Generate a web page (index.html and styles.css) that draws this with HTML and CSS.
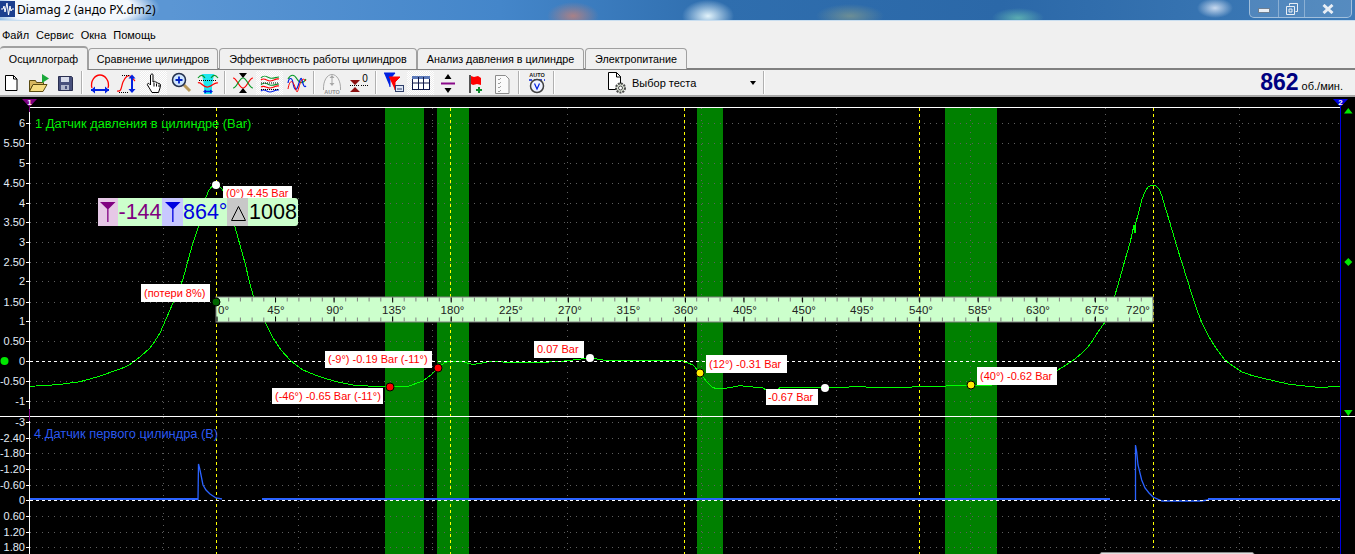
FILE: index.html
```html
<!DOCTYPE html>
<html lang="ru">
<head>
  <meta charset="UTF-8">
  <title>Diamag 2</title>
  <link rel="stylesheet" href="styles.css">
</head>
<body>

  <!-- Title bar -->
  <div class="titlebar">
    <svg class="app-icon" width="15" height="16" viewBox="0 0 15 16">
      <rect width="15" height="16" fill="#1c3f8f"/>
      <path d="M1 8h2l1-3 1 6 2-9 1.500 12 1.500-9 1 5 1-2h2" fill="none" stroke="#fff"/>
    </svg>
    <span class="app-title">Diamag 2 (андо PX.dm2)</span>
    <div class="win-btns">
      <div class="win-btn win-min"><span class="min-bar"></span></div>
      <div class="win-btn win-max">
        <svg width="12" height="12" viewBox="0 0 12 12"><path d="M3.500 2.500V.5h8v8h-2M.5 3.500h8v8h-8zM3 6h3v3H3z" fill="none" stroke="#e8eef5"/></svg>
      </div>
      <div class="win-btn win-close">
        <svg width="12" height="10" viewBox="0 0 12 10"><path d="M1.500 1l9 8M10.500 1l-9 8" stroke="#e8eef5" stroke-width="3"/></svg>
      </div>
    </div>
  </div>

  <!-- Menu -->
  <div class="menubar">
    <span>Файл</span>
    <span>Сервис</span>
    <span>Окна</span>
    <span>Помощь</span>
  </div>

  <!-- Tabs -->
  <div class="tabs">
    <div class="tab tab-active">Осциллограф</div>
    <div class="tab tab-2">Сравнение цилиндров</div>
    <div class="tab tab-3">Эффективность работы цилиндров</div>
    <div class="tab tab-4">Анализ давления в цилиндре</div>
    <div class="tab tab-5">Электропитание</div>
  </div>

  <!-- Toolbar -->
  <div class="toolbar">
    <div class="group group-first">
      <div class="btn"><svg viewBox="0 0 24 24"><path d="M6.500 4.500h8l3.500 3.500v11.500H6.500z" fill="#fff" stroke="#000"/><path d="M14.500 4.500V8H18" fill="none" stroke="#000"/></svg></div>
      <div class="btn"><svg viewBox="0 0 24 24"><path d="M3.500 9.500h6l1 2h7v3h-11l-3 6z" fill="#d8b860" stroke="#5a4a10"/><path d="M3.500 20.500l3.500-7h14l-4 7z" fill="#f5dc80" stroke="#5a4a10"/><path d="M16 3v9l7-4.500z" fill="#1aa83a"/></svg></div>
      <div class="btn"><svg viewBox="0 0 24 24"><path d="M5.500 5.500h13l1 1v13h-14z" fill="#48507c" stroke="#2a2f50"/><rect x="8" y="6" width="8" height="5" fill="#d8dcea"/><rect x="8" y="14" width="8" height="5" fill="#b0b6cc"/><rect x="12" y="15" width="2" height="3" fill="#48507c"/></svg></div>
    </div>
    <div class="sep"></div>
    <div class="group">
      <div class="btn"><svg viewBox="0 0 24 24"><path d="M4 17c-2-7 3-13 8-13s10 6 8 13" fill="none" stroke="#f00" stroke-width="1.300"/><path d="M3 19h18" stroke="#0020e0" stroke-width="2"/><path d="M3 19l4-3.500v7zM21 19l-4-3.500v7z" fill="#0020e0"/></svg></div>
      <div class="btn"><svg viewBox="0 0 24 24"><path d="M2 20c5 1 4-4 6-9s5-7 7-6 3 3 5 5" fill="none" stroke="#f00" stroke-width="1.200"/><path d="M7 4.500h8M4 21.500h10" stroke="#000" stroke-dasharray="1 1"/><path d="M17 7v11" stroke="#0020e0" stroke-width="2"/><path d="M17 3.500l-3.500 4h7zM17 22l-3.500-4h7z" fill="#0020e0"/></svg></div>
      <div class="btn btn-on"><svg viewBox="0 0 24 24"><path d="M9 3.500c1-1 2-.5 2 .5v7l1-.5c1-.5 1.500 0 2 1 1-.5 1.500 0 2 1 1-.5 2 0 2.500 1.500l-.5 3-1.500 4.500H10L5.500 14c-.5-1 .5-2 1.500-1.500L8.500 14V4z" fill="#fff" stroke="#000"/><path d="M12 11.500v4M14.500 12.500v3M17 13.500v2.500" stroke="#000"/></svg></div>
      <div class="btn"><svg viewBox="0 0 24 24"><path d="M15 14l6 6" stroke="#b89858" stroke-width="3"/><circle cx="10" cy="9" r="6.500" fill="#cfe6ff" stroke="#24304c" stroke-width="1.500"/><path d="M6.500 9h7M10 5.500v7" stroke="#0020c0" stroke-width="1.800"/></svg></div>
      <div class="btn"><svg viewBox="0 0 24 24"><path d="M6 3h12l-2 12v8H8v-8z" fill="#1fe6ee"/><path d="M2 7c3-4 5-3 7 0M15 7c2-3 4-4 7 0" fill="none" stroke="#0a9a2a" stroke-width="1.200"/><path d="M2 12c3-2 5 5 10 4s6-5 10-4" fill="none" stroke="#f00" stroke-width="1.200"/><path d="M3 9.500h18" stroke="#000" stroke-dasharray="1 1"/><path d="M8 20.500h8" stroke="#0020e0" stroke-width="1.500"/><path d="M7 20.500l3-2v4zM17 20.500l-3-2v4z" fill="#0020e0"/></svg></div>
    </div>
    <div class="sep"></div>
    <div class="group">
      <div class="btn"><svg viewBox="0 0 24 24"><path d="M2 7c4 0 6 10 10 10s6-10 10-10" fill="none" stroke="#f00" stroke-width="1.200"/><path d="M2 17c4 0 6-10 10-10s6 10 10 10" fill="none" stroke="#0a9a2a" stroke-width="1.200"/><path d="M8 2h8l-4 5zM8 22h8l-4-5z"/></svg></div>
      <div class="btn btn-on"><svg viewBox="0 0 24 24"><path d="M3 7c3-4 6-1 9 0s6-1 9-1M3 14c3-4 6-1 9 0s6-1 9-1" fill="none" stroke="#0a9a2a" stroke-width="1.100"/><path d="M3 9c3-3 6 1 9 1s6-3 9-2M3 16c3-2 6 1 9 1s6-3 9-2" fill="none" stroke="#f00" stroke-width="1.100"/><path d="M3 20c3-3 6 1 9 1s6-3 9-2" fill="none" stroke="#0020e0" stroke-width="1.100"/><path d="M3 12h18M3 18.500h18" stroke="#000" stroke-dasharray="1 1"/></svg></div>
      <div class="btn"><svg viewBox="0 0 24 24"><path d="M3 8c3-5 6-5 9 0s6 5 9 0" fill="none" stroke="#0a9a2a" stroke-width="1.200"/><path d="M3 12c1-6 4-6 5 0s3 9 5 3 3-10 4-6 2 8 4 6" fill="none" stroke="#0020e0" stroke-width="1.200"/><path d="M3 18c2-11 5-8 7-2s2 7 4 0 4-10 7-6" fill="none" stroke="#f00" stroke-width="1"/></svg></div>
    </div>
    <div class="sep"></div>
    <div class="group">
      <div class="btn"><svg viewBox="0 0 24 24"><path d="M3.500 19C3 10 7 3.500 12 3.500S21 10 20.500 19" fill="#f4f4f4" stroke="#a8a8a8"/><path d="M12 5v9" stroke="#a8a8a8"/><path d="M9.500 7L12 4l2.500 3zM9.500 12l2.500 3 2.500-3z" fill="#a8a8a8"/><text class="ico-text ico-grey" x="12" y="23">AUTO</text></svg></div>
      <div class="btn"><svg viewBox="0 0 24 24"><path d="M3 9h10l-5 5zM3 21h10l-5-5z" fill="#8c1010"/><path d="M3 14.500h10" stroke="#000" stroke-dasharray="1 1"/><path d="M14 14.500h8" stroke="#000" stroke-dasharray="1 1"/><text class="ico-zero" x="18" y="11">0</text></svg></div>
    </div>
    <div class="sep"></div>
    <div class="group">
      <div class="btn"><svg viewBox="0 0 24 24"><path d="M2 2h11l-5 6v8" fill="#0020e0" stroke="#0020e0"/><path d="M7 6h11l-5 5v8" fill="#f00" stroke="#f00"/><rect x="13.500" y="14.500" width="8" height="6" fill="#dfe7f5" stroke="#30406a"/><path d="M15 18h5" stroke="#30406a"/></svg></div>
      <div class="btn btn-on"><svg viewBox="0 0 24 24"><rect x="3.500" y="5.500" width="17" height="13" fill="#fff" stroke="#101848"/><rect x="3" y="5" width="18" height="3" fill="#5a78b8"/><path d="M9.500 6v12M14.500 6v12M3.500 12h17" stroke="#101848"/></svg></div>
      <div class="btn"><svg viewBox="0 0 24 24"><path d="M5 12.500h14" stroke="#8a0a8a" stroke-width="2"/><path d="M12 3l-3.500 5h7zM12 22l-3.500-5h7z" fill="#000"/></svg></div>
      <div class="btn"><svg viewBox="0 0 24 24"><path d="M7 4v18" stroke="#000" stroke-width="1.300"/><path d="M8 5l3 1 4-1 3 2v7l-4-1-4 1-2-1z" fill="#f00"/><path d="M13 19h6M16 16v6" stroke="#0a8a2a" stroke-width="2"/></svg></div>
      <div class="btn"><svg viewBox="0 0 24 24"><path d="M5.500 4.500h10l3.500 3.500v14.500H5.500z" fill="#fafafa" stroke="#8c8c8c"/><path d="M8 8l1 1 2-2M8 12l1 1 2-2M8 16l1 1 2-2M8 20l1 1 2-2" fill="none" stroke="#a0a0a0"/></svg></div>
    </div>
    <div class="sep"></div>
    <div class="group">
      <div class="btn"><svg viewBox="0 0 24 24"><text class="ico-text" x="12" y="6">AUTO</text><path d="M4 9h16" stroke="#0020e0" stroke-dasharray="3 2" stroke-width="1.500"/><circle cx="12" cy="15" r="6.500" fill="#eef2ff" stroke="#404040" stroke-width="1.500"/><path d="M9.500 12.500L12 18l2.500-5.500" fill="none" stroke="#0020e0" stroke-width="1.200"/></svg></div>
    </div>
    <div class="sep"></div>
    <div class="combo">
      <svg class="combo-icon" width="24" height="24" viewBox="0 0 24 24"><path d="M3.500 1.500h8l4 4v13h-12z" fill="#fff" stroke="#000"/><path d="M11.500 1.500V6H16" fill="none" stroke="#000"/><circle cx="15.500" cy="17" r="4.500" fill="#dfe6d8" stroke="#4a4a4a" stroke-width="2" stroke-dasharray="2 1"/><circle cx="15.500" cy="17" r="2" fill="#fff" stroke="#4a4a4a"/></svg>
      <span class="combo-text">Выбор теста</span>
      <span class="combo-caret"></span>
    </div>
    <div class="sep"></div>
    <div class="rpm"><b>862</b> об./мин.</div>
  </div>

  <!-- Oscilloscope -->
  <div class="scope">
    <svg class="plot" width="1355" height="457" viewBox="0 97 1355 457">
      <!-- bands -->
      <g class="band">
        <rect x="385" y="108" width="39" height="446"/>
        <rect x="437" y="108" width="32" height="446"/>
        <rect x="697" y="108" width="26" height="446"/>
        <rect x="945" y="108" width="52" height="446"/>
      </g>

      <!-- grid -->
      <path class="grid" d="M30 123.500H1340M30 143.500H1340M30 163.500H1340M30 183.500H1340M30 203.500H1340M30 222.500H1340M30 242.500H1340M30 262.500H1340M30 281.500H1340M30 302.500H1340M30 321.500H1340M30 341.500H1340M30 381.500H1340M30 401.500H1340M30 422.500H1340M30 438.500H1340M30 453.500H1340M30 469.500H1340M30 485.500H1340M30 516.500H1340M30 532.500H1340M30 547.500H1340"/>
      <path class="grid" d="M163.500 108V416M298.500 108V416M432.500 108V416M567.500 108V416M701.500 108V416M836.500 108V416M970.500 108V416M1105.500 108V416M1239.500 108V416M163.500 417V554M298.500 417V554M432.500 417V554M567.500 417V554M701.500 417V554M836.500 417V554M970.500 417V554M1105.500 417V554M1239.500 417V554"/>
      <path class="cursor-line" d="M216.500 108V554M450.500 108V554M684.500 108V554M919.500 108V554M1153.500 108V548"/>

      <!-- frame -->
      <path class="frame" d="M30 107.500H1340M0 416.500H1355M29.500 107V554"/>
      <path class="frame" d="M26 123.500h4M26 143.500h4M26 163.500h4M26 183.500h4M26 203.500h4M26 222.500h4M26 242.500h4M26 262.500h4M26 281.500h4M26 302.500h4M26 321.500h4M26 341.500h4M26 361.500h4M26 381.500h4M26 401.500h4M26 422.500h4M26 438.500h4M26 453.500h4M26 469.500h4M26 485.500h4M26 500.500h4M26 516.500h4M26 532.500h4M26 547.500h4"/>
      <path class="marker-1-line" d="M29.500 107v5M29.500 409v12"/>
      <path class="marker-2-line" d="M1340.500 103V554"/>

      <!-- axis labels -->
      <g class="axis">
        <text x="25" y="127">6</text>
        <text x="25" y="147">5.50</text>
        <text x="25" y="167">5</text>
        <text x="25" y="187">4.50</text>
        <text x="25" y="207">4</text>
        <text x="25" y="226">3.50</text>
        <text x="25" y="246">3</text>
        <text x="25" y="266">2.50</text>
        <text x="25" y="285">2</text>
        <text x="25" y="306">1.50</text>
        <text x="25" y="325">1</text>
        <text x="25" y="345">0.50</text>
        <text x="25" y="365">0</text>
        <text x="25" y="385">-0.50</text>
        <text x="25" y="405">-1</text>
        <text x="25" y="426">-3</text>
        <text x="25" y="442">-2.40</text>
        <text x="25" y="457">-1.80</text>
        <text x="25" y="473">-1.20</text>
        <text x="25" y="489">-0.60</text>
        <text x="25" y="504">0</text>
        <text x="25" y="520">0.60</text>
        <text x="25" y="536">1.20</text>
        <text x="25" y="551">1.80</text>
      </g>

      <!-- traces -->
      <polyline class="trace-green" points="30,386.300 45,385.500 60,384.500 70,383 80,381.700 90,379 100,376 110,372.500 120,369 125,367 130,364.500 140,357 150,348 155,341 160,333 166,319 173,303 178,291 182.700,280 186,268 190,253 194,240 198,228 203,208 206,197 209,190 212,186.500 216,185 219,186 222,189 226,198 230,212 235,227 240,245 245,263 249,280 253,295 259,310 265,322 273,338 281,350 290,360 296,365 303,370 315,375 327,379 340,382.500 353,385 378,386.700 390,387 407,386.700 423,381 431,375 438,368 444,363 450,361 460,361 473,364.600 490,361.500 527,363 560,361.500 590,358 610,361 640,360.500 663,360.500 683,361 693,365 700,373 707,382 712,387 717,389 727,388 740,385.700 763,388 766,390 778,390 780,387 825,387 840,388 853,386.500 890,388 923,386.500 970,385.500 993,385 1030,382 1058,370 1066,365 1075,359 1082,353 1088,347 1093,340 1098,332 1105,322 1115,295 1120,278 1125,260 1130,243 1134,225 1135,233 1136,222 1138,215 1141.700,200 1145,192 1148,187 1151,185.500 1153,185 1156,186 1159,189 1162,196 1165,207 1168.500,218 1172,230 1177,247 1182,263 1187,279 1192,295 1197,310 1202,323 1207,333 1212,342 1218,351 1225,360 1233,366 1242,372 1252,375.500 1262,378 1275,381 1288,384 1300,385.500 1315,387 1328,387 1340,386.700"/>
      <path class="trace-blue-flat" d="M30 499H198M262 499H1110M1208 499H1340"/>
      <polyline class="trace-blue" points="198,500 198.500,464 200,470 203,485 206,490 210,494 216,498 222,499"/>
      <polyline class="trace-blue" points="1135.500,500 1135.500,445 1136.700,452 1138,465 1141.700,480 1145,488 1149,493 1153,497 1162,501 1201,501 1208,500"/>
      <path class="zero-line" d="M30 361.500H1340M30 500.500H1340"/>

      <!-- sensor names -->
      <text class="name-green" x="35" y="128">1 Датчик давления в цилиндре (Bar)</text>
      <text class="name-blue" x="34" y="438">4 Датчик первого цилиндра (В)</text>

      <!-- value labels -->
      <g class="tag">
        <rect x="223" y="186" width="69" height="14"/><text x="226" y="197">(0°) 4.45 Bar</text>
        <rect x="141" y="284" width="69" height="18"/><text x="144" y="297">(потери 8%)</text>
        <rect x="325" y="351" width="107" height="17"/><text x="328" y="363">(-9°) -0.19 Bar (-11°)</text>
        <rect x="272" y="388" width="111" height="16"/><text x="275" y="400">(-46°) -0.65 Bar (-11°)</text>
        <rect x="534" y="341" width="50" height="17"/><text x="537" y="353">0.07 Bar</text>
        <rect x="706" y="355" width="81" height="18"/><text x="709" y="368">(12°) -0.31 Bar</text>
        <rect x="766" y="389" width="52" height="16"/><text x="768" y="401">-0.67 Bar</text>
        <rect x="977" y="367" width="80" height="18"/><text x="980" y="380">(40°) -0.62 Bar</text>
      </g>

      <!-- ruler -->
      <rect class="ruler" x="216" y="297" width="937" height="25"/>
      <path class="ruler-minor" d="M216.500 299.500H1153M216.500 319.500H1153"/>
      <path class="ruler-major" d="M216.500 300H1153M216.500 319H1153"/>
      <g class="ruler-text">
        <text x="218" y="314" class="start">0°</text>
        <text x="276" y="314">45°</text>
        <text x="335" y="314">90°</text>
        <text x="394" y="314">135°</text>
        <text x="452.500" y="314">180°</text>
        <text x="511" y="314">225°</text>
        <text x="570" y="314">270°</text>
        <text x="628.500" y="314">315°</text>
        <text x="686" y="314">360°</text>
        <text x="745" y="314">405°</text>
        <text x="804" y="314">450°</text>
        <text x="862" y="314">495°</text>
        <text x="921" y="314">540°</text>
        <text x="980" y="314">585°</text>
        <text x="1038" y="314">630°</text>
        <text x="1097" y="314">675°</text>
        <text x="1138" y="314">720°</text>
      </g>

      <!-- points -->
      <circle class="pt pt-white" cx="216" cy="185" r="4"/>
      <circle class="pt pt-dark" cx="216" cy="302" r="4"/>
      <circle class="pt pt-red" cx="390" cy="387" r="4"/>
      <circle class="pt pt-red" cx="438" cy="368" r="4"/>
      <circle class="pt pt-white" cx="590" cy="358" r="4"/>
      <circle class="pt pt-yellow" cx="700" cy="373" r="4"/>
      <circle class="pt pt-white" cx="825" cy="388" r="4"/>
      <circle class="pt pt-yellow" cx="971" cy="385" r="4"/>

      <!-- markers -->
      <path class="marker-1" d="M22 99h15l-7.500 8z"/>
      <text class="marker-num" x="29.500" y="105">1</text>
      <path class="marker-2" d="M1333 99h15l-7.500 8z"/>
      <text class="marker-num" x="1340.500" y="105">2</text>
      <path class="limit" d="M1344 113.500l4.300-5.500 4.300 5.500zM1344 410h8.600l-4.300 6zM1348.300 258l4 4-4 4-4-4z"/>
      <circle class="limit" cx="4.500" cy="361" r="4"/>

      <!-- window behind, bottom edge -->
      <rect class="under-window" x="1100" y="552.500" width="154" height="4" rx="2"/>
    </svg>

    <!-- cursor readout -->
    <div class="readout">
      <div class="cell-icon icon-purple"><svg width="20" height="28" viewBox="0 0 20 28"><path d="M2 4h15.500l-7 7v13H9.200V11z" fill="#800080"/></svg></div>
      <div class="cell-value value-purple">-144</div>
      <div class="cell-icon icon-blue"><svg width="20" height="28" viewBox="0 0 20 28"><path d="M2 4h15.500l-7 7v13H9.200V11z" fill="#0000e0"/></svg></div>
      <div class="cell-value value-blue">864°</div>
      <div class="cell-icon icon-grey"><svg width="20" height="28" viewBox="0 0 20 28"><path d="M10.500 8.500l7 14h-14z" fill="none" stroke="#000"/></svg></div>
      <div class="cell-value value-black">1008</div>
    </div>
  </div>

</body>
</html>
```

FILE: styles.css
```css
* {
  box-sizing: border-box;
}

html, body {
  margin: 0;
  height: 554px;
  overflow: hidden;
}

body {
  font-family: "Liberation Sans", Arial, sans-serif;
  font-size: 11px;
  color: #000;
  background: #f0f0f0;
}

/* Title bar */
.titlebar {
  height: 21px;
  display: flex;
  align-items: flex-start;
  border-bottom: 1px solid #c9def0;
  background:
    radial-gradient(ellipse 90px 26px at 70px 8px, #f4f8fd 70%, rgba(240,246,252,0) 100%),
    radial-gradient(ellipse 26px 14px at 573px 16px, rgba(215,130,110,0.7), rgba(215,130,110,0) 100%),
    radial-gradient(ellipse 26px 16px at 708px 16px, rgba(235,250,255,0.95), rgba(235,250,255,0) 100%),
    radial-gradient(ellipse 34px 12px at 850px 16px, rgba(150,165,135,0.6), rgba(150,165,135,0) 100%),
    radial-gradient(ellipse 26px 10px at 1018px 18px, rgba(110,200,180,0.7), rgba(110,200,180,0) 100%),
    radial-gradient(ellipse 18px 10px at 1215px 8px, rgba(225,235,250,0.85), rgba(225,235,250,0) 100%),
    linear-gradient(90deg, #5b96d4 170px, #4486ca 500px, #2f6eae 720px, #2b68a8 1000px, #3f7cb8 1355px);
}

.app-icon {
  margin: 1px 0 0 0;
}

.app-title {
  margin: 2px 0 0 2px;
  font-family: "Noto Sans", sans-serif;
  font-size: 12px;
  line-height: 16px;
}

.win-btns {
  display: flex;
  margin-left: auto;
  margin-right: 3px;
  height: 18px;
  border: 1px solid rgba(225,235,245,0.55);
  border-top: none;
  border-radius: 0 0 5px 5px;
  background: rgba(255,255,255,0.12);
}

.win-btn {
  display: flex;
  align-items: center;
  justify-content: center;
  border-right: 1px solid rgba(225,235,245,0.4);
}

.win-min { width: 29px; }
.win-max { width: 26px; }
.win-close { width: 46px; border-right: none; }

.min-bar {
  width: 12px;
  height: 5px;
  margin-top: 3px;
  background: #e8eef5;
  border: 1px solid #6d7f92;
}

/* Menu */
.menubar {
  height: 25px;
  display: flex;
  align-items: center;
  gap: 7px;
  padding: 3px 0 0 2px;
}

/* Tabs */
.tabs {
  height: 24px;
  display: flex;
  align-items: flex-end;
  border-bottom: 2px solid #808080;
  font-size: 10.750px;
}

.tab {
  height: 21px;
  margin-bottom: -1px;
  padding-top: 4px;
  text-align: center;
  background: #f0f0f0;
  border: 1px solid #a0a0a0;
  border-bottom: none;
  border-radius: 4px 4px 0 0;
}

.tab-active {
  width: 88px;
  height: 24px;
  margin-bottom: -2px;
  padding-top: 5px;
  border-width: 2px 1px 0 0;
  border-color: #a0a0a0;
}

.tab-2 { width: 130px; }
.tab-3 { width: 198px; margin-left: 1px; }
.tab-4 { width: 167px; }
.tab-5 { width: 102px; margin-left: 1px; }

/* Toolbar */
.toolbar {
  height: 27px;
  display: flex;
  align-items: center;
  gap: 3px;
  border-bottom: 2px solid #a8a8a8;
}

.group {
  display: flex;
}

.group-first {
  margin-left: -3px;
}

.btn {
  width: 27px;
  height: 24px;
  display: flex;
  align-items: center;
  justify-content: center;
}

.btn svg {
  width: 24px;
  height: 24px;
}

.btn-on {
  background: repeating-conic-gradient(#fff 0 25%, #ececec 0 50%) 0 0 / 2px 2px;
}

.ico-text {
  font-size: 5.500px;
  font-weight: bold;
  text-anchor: middle;
  fill: #1a1a1a;
}

.ico-grey {
  fill: #909090;
}

.ico-zero {
  font-size: 10px;
  text-anchor: middle;
}

.sep {
  width: 2px;
  height: 23px;
  background: #b0b0b0;
  border-right: 1px solid #fff;
}

.combo {
  width: 202px;
  height: 24px;
  display: flex;
  align-items: center;
  padding-left: 47px;
}

.combo-text {
  margin-left: 3px;
  font-size: 11px;
}

.combo-caret {
  margin-left: auto;
  margin-right: 4px;
  border-left: 3.500px solid transparent;
  border-right: 3.500px solid transparent;
  border-top: 4px solid #000;
}

.rpm {
  margin-left: auto;
  padding-right: 12px;
  font-size: 11px;
  white-space: nowrap;
}

.rpm b {
  font-size: 23px;
  color: #000080;
}

/* Scope */
.scope {
  position: relative;
  height: 457px;
  background: #000;
}

.plot {
  display: block;
  font-family: "Liberation Sans", Arial, sans-serif;
}

.band { fill: #008000; }

.grid {
  fill: none;
  stroke: #5e5e5e;
  stroke-dasharray: 1 5;
}

.cursor-line {
  fill: none;
  stroke: #ffff00;
  stroke-dasharray: 3 3;
}

.zero-line {
  fill: none;
  stroke: #fff;
  stroke-dasharray: 3 3;
}

.frame {
  fill: none;
  stroke: #fff;
}

.marker-1-line {
  stroke: #800080;
}

.marker-2-line {
  stroke: #0000e0;
}

.axis text {
  font-size: 11px;
  text-anchor: end;
  fill: #e4ecf6;
}

.trace-green {
  fill: none;
  stroke: #00ff00;
  shape-rendering: crispEdges;
}

.trace-blue {
  fill: none;
  stroke: #2a62ff;
  stroke-width: 1.300;
}

.trace-blue-flat {
  fill: none;
  stroke: #2a62ff;
  stroke-width: 2;
}

.name-green {
  font-size: 12.850px;
  fill: #00ee00;
}

.name-blue {
  font-size: 12.850px;
  fill: #2a58f0;
}

.tag rect { fill: #fff; }

.tag text {
  font-size: 11px;
  fill: #f00;
}

.ruler {
  fill: #ccffcc;
  stroke: #808080;
}

.ruler-minor {
  fill: none;
  stroke: #808080;
  stroke-width: 4;
  stroke-dasharray: 1 10.700;
}

.ruler-major {
  fill: none;
  stroke: #000;
  stroke-width: 5;
  stroke-dasharray: 1 57.560;
}

.ruler-text text {
  font-size: 11.500px;
  text-anchor: middle;
  fill: #222;
}

.ruler-text .start {
  text-anchor: start;
}

.pt { stroke: #000; }
.pt-white { fill: #fff; stroke: none; }
.pt-dark { fill: #006400; }
.pt-red { fill: #f00; }
.pt-yellow { fill: #ffea00; }

.marker-1 { fill: #800080; }
.marker-2 { fill: #0000e0; }

.marker-num {
  font-size: 8px;
  font-weight: bold;
  text-anchor: middle;
  fill: #fff;
}

.limit { fill: #00e800; }

.under-window {
  fill: #e0e0e0;
  stroke: #8a8a8a;
}

/* Cursor readout */
.readout {
  position: absolute;
  left: 98px;
  top: 101px;
  height: 28px;
  display: flex;
  font-size: 21.500px;
  line-height: 28px;
  background: #ccffcc;
  border-radius: 0 3px 3px 0;
}

.cell-icon {
  height: 28px;
  display: flex;
  align-items: center;
  justify-content: center;
}

.cell-icon svg { display: block; }

.icon-purple { width: 20px; background: #e6c8e6; }
.icon-blue { width: 21px; background: #c8c8ff; }
.icon-grey { width: 21px; background: #c8c8c8; }

.cell-value { text-align: center; }

.value-purple { width: 44px; color: #800080; }
.value-blue { width: 44px; color: #0000e0; }
.value-black { width: 50px; color: #000; }
```
